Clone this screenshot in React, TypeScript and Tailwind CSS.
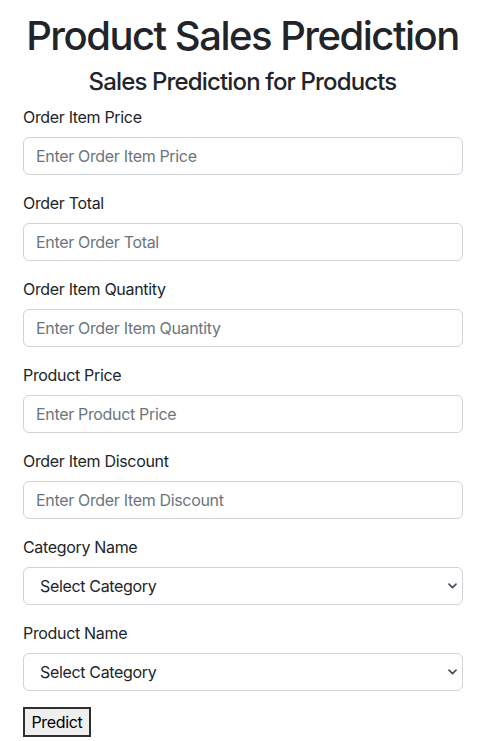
import React from "react";

// Bootstrap-like prediction form: centered headings, stacked label + input rows,
// two selects with a small chevron, and a plain native-looking submit button.

const inputs = [
  { label: "Order Item Price", placeholder: "Enter Order Item Price" },
  { label: "Order Total", placeholder: "Enter Order Total" },
  { label: "Order Item Quantity", placeholder: "Enter Order Item Quantity" },
  { label: "Product Price", placeholder: "Enter Product Price" },
  { label: "Order Item Discount", placeholder: "Enter Order Item Discount" },
];

const selects = ["Category Name", "Product Name"];

function Chevron() {
  return (
    <svg
      width="9"
      height="6"
      viewBox="0 0 9 6"
      className="pointer-events-none absolute right-[6px] top-1/2 -translate-y-1/2"
    >
      <path d="M1 1.2 4.5 4.6 8 1.2" fill="none" stroke="#4a4f55" strokeWidth="1.7" strokeLinecap="round" strokeLinejoin="round" />
    </svg>
  );
}

export default function App() {
  return (
    <div className="min-h-[741px] bg-white pt-3 font-['Inter',_'Helvetica_Neue',_Arial,_sans-serif] text-[16px] leading-6 tracking-[-0.33px] text-[#212529]">
      <h1 className="mb-2 text-center text-[40px] font-medium leading-[48px] tracking-[-1.5px]">Product Sales Prediction</h1>
      <h3 className="mb-2 text-center text-[24px] font-medium leading-[28.8px] tracking-[-0.85px]">Sales Prediction for Products</h3>
      <form className="ml-[23px] w-[440px]">
        {inputs.map((f) => (
          <div key={f.label} className="mb-4">
            <label className="mb-2 block">{f.label}</label>
            <input
              type="text"
              placeholder={f.placeholder}
              className="block h-[38px] w-full rounded-[6px] border border-[#ced4da] bg-white px-3 py-1.5 text-[16px] tracking-[-0.33px] text-[#212529] outline-none placeholder:text-[#6c757d]"
            />
          </div>
        ))}
        {selects.map((s) => (
          <div key={s} className="mb-4">
            <label className="mb-2 block">{s}</label>
            <div className="relative">
              <select className="block h-[38px] w-full appearance-none rounded-[6px] border border-[#ced4da] bg-white pl-4 pr-8 text-[16px] tracking-[-0.33px] text-[#212529] outline-none">
                <option>Select Category</option>
              </select>
              <Chevron />
            </div>
          </div>
        ))}
        <button
          type="button"
          className="h-[30px] w-[68px] border-2 border-[#2f2f2f] bg-[#efefef] text-[16px] leading-6 tracking-[-0.33px] text-black"
        >
          Predict
        </button>
      </form>
    </div>
  );
}
